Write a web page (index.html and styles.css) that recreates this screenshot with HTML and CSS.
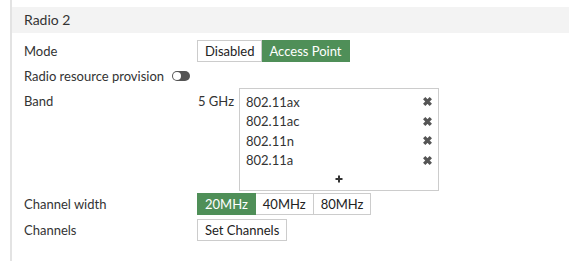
FILE: index.html
```html
<!DOCTYPE html>
<html lang="en">
<head>
    <meta charset="UTF-8">
    <title>Radio 2</title>
    <link rel="stylesheet" href="styles.css">
</head>
<body>
    <div class="panel">
        <div class="section-title">Radio 2</div>

        <div class="row row-mode">
            <div class="label">Mode</div>
            <div class="btn-group">
                <span class="btn">Disabled</span>
                <span class="btn active">Access Point</span>
            </div>
        </div>

        <div class="row row-provision">
            <span class="label-inline">Radio resource provision</span>
            <span class="toggle"><span class="knob"></span></span>
        </div>

        <div class="row row-band">
            <div class="label label-top">Band</div>
            <div class="band-unit">5 GHz</div>
            <div class="band-list">
                <div class="band-item"><span>802.11ax</span><svg class="remove" viewBox="0 0 10 10"><path d="M2 2L8 8M8 2L2 8"/></svg></div>
                <div class="band-item"><span>802.11ac</span><svg class="remove" viewBox="0 0 10 10"><path d="M2 2L8 8M8 2L2 8"/></svg></div>
                <div class="band-item"><span>802.11n</span><svg class="remove" viewBox="0 0 10 10"><path d="M2 2L8 8M8 2L2 8"/></svg></div>
                <div class="band-item"><span>802.11a</span><svg class="remove" viewBox="0 0 10 10"><path d="M2 2L8 8M8 2L2 8"/></svg></div>
                <div class="band-add"><svg class="add" viewBox="0 0 8 8"><path d="M4 0.5V7.5M0.5 4H7.5"/></svg></div>
            </div>
        </div>

        <div class="row row-width">
            <div class="label">Channel width</div>
            <div class="btn-group">
                <span class="btn active">20MHz</span>
                <span class="btn">40MHz</span>
                <span class="btn">80MHz</span>
            </div>
        </div>

        <div class="row row-channels">
            <div class="label">Channels</div>
            <span class="btn">Set Channels</span>
        </div>
    </div>
</body>
</html>
```

FILE: styles.css
```css
body {
    margin: 0;
    background-color: #fff;
    font-family: Lato, "Open Sans", sans-serif;
    font-size: 13px;
    color: #333;
}
.panel {
    margin-left: 10px;
    height: 261px;
    border-left: 2px solid #e3e3e3;
    padding-top: 7px;
    box-sizing: border-box;
}
.section-title {
    height: 26px;
    line-height: 26px;
    padding-left: 12px;
    background-color: #f3f3f3;
    font-size: 14px;
    color: #333;
}
.row {
    display: flex;
    align-items: center;
    padding-left: 12px;
}
.label {
    width: 173px;
    flex-shrink: 0;
}
.label-top {
    align-self: flex-start;
    padding-top: 5px;
}
.row-mode {
    margin-top: 7px;
}
.row-provision {
    margin-top: 5px;
    height: 18px;
}
.row-band {
    margin-top: 3px;
    align-items: flex-start;
}
.row-width {
    margin-top: 2px;
}
.row-channels {
    margin-top: 4px;
}
.btn-group {
    display: flex;
}
.btn {
    display: inline-block;
    height: 20px;
    line-height: 20px;
    padding: 0 7px;
    border: 1px solid #ccc;
    background-color: #fff;
    color: #222;
    white-space: nowrap;
}
.btn-group .btn + .btn {
    border-left: none;
}
.btn.active {
    background-color: #4f8f58;
    border-color: #4f8f58;
    color: #fff;
}
.label-inline {
    margin-right: 8px;
}
.toggle {
    display: inline-block;
    width: 18px;
    height: 10px;
    border-radius: 5px;
    background-color: #555;
    position: relative;
}
.knob {
    position: absolute;
    left: 1px;
    top: 1px;
    width: 8px;
    height: 8px;
    border-radius: 50%;
    background-color: #fff;
}
.band-unit {
    width: 41px;
    padding-left: 1px;
    padding-top: 5px;
    flex-shrink: 0;
}
.band-list {
    width: 200px;
    height: 103px;
    border: 1px solid #ccc;
    padding: 3px 0 0 6px;
    box-sizing: border-box;
}
.band-item {
    display: flex;
    align-items: center;
    justify-content: space-between;
    height: 19.5px;
    padding-right: 5px;
}
.remove {
    width: 11px;
    height: 11px;
    stroke: #555;
    stroke-width: 3;
    fill: none;
}
.band-add {
    display: flex;
    justify-content: center;
    padding-right: 6px;
    margin-top: 5px;
}
.add {
    width: 8px;
    height: 8px;
    stroke: #333;
    stroke-width: 2;
    fill: none;
}
```
